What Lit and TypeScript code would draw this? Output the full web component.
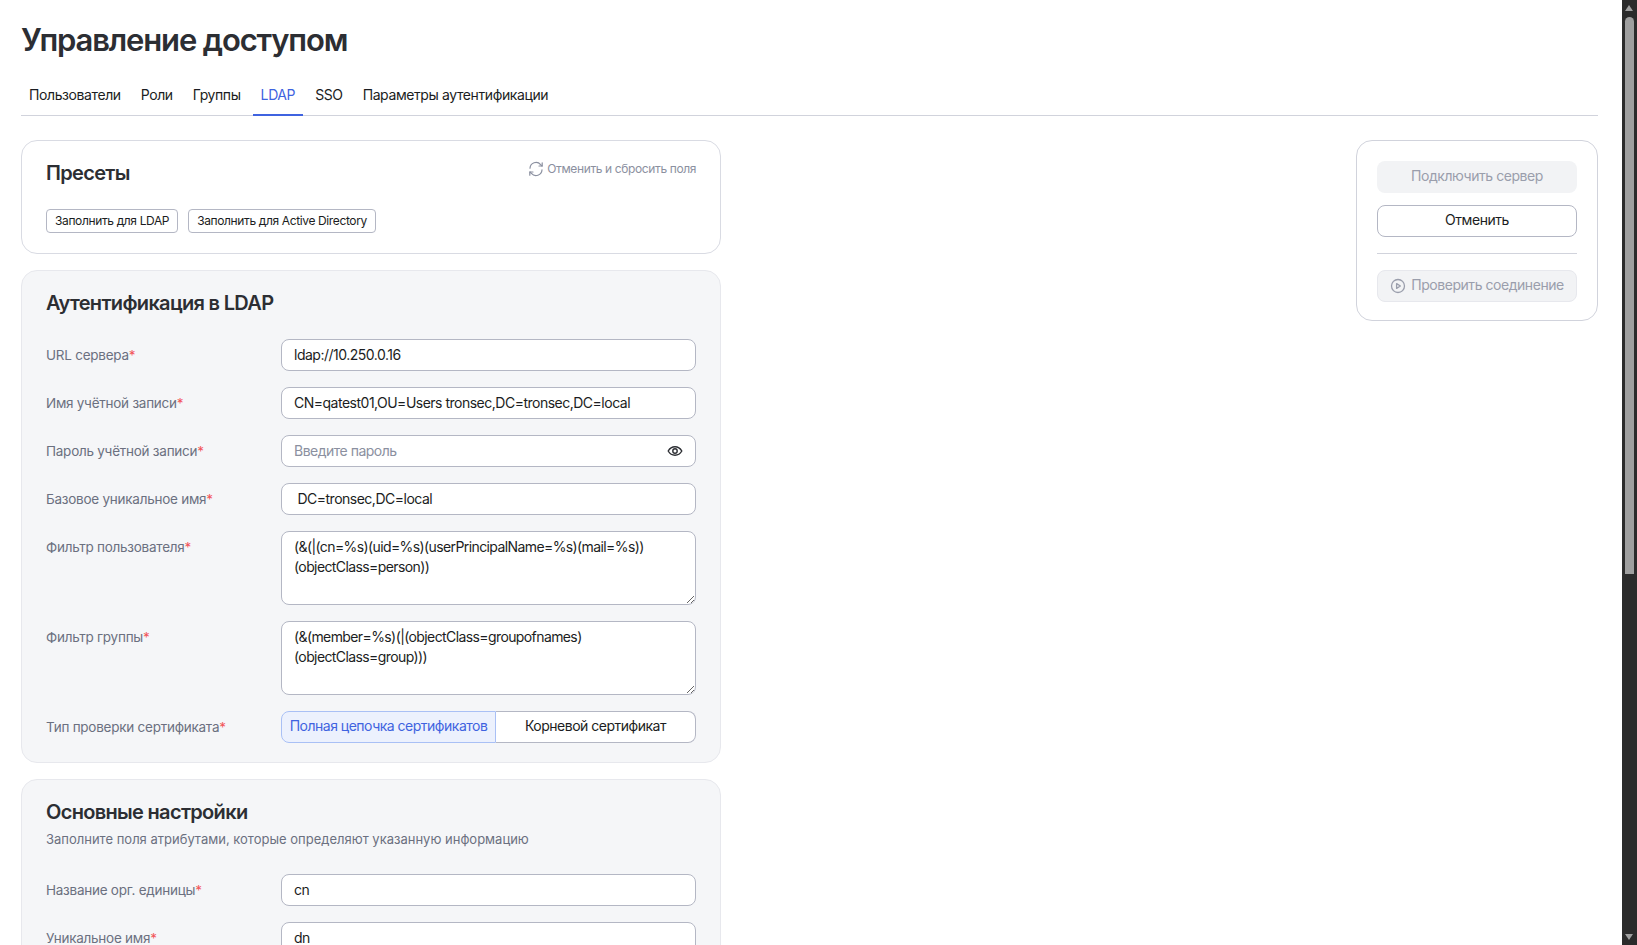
import {LitElement, html, css} from 'lit';
import {customElement} from 'lit/decorators.js';

const tabs = ['Пользователи', 'Роли', 'Группы', 'LDAP', 'SSO', 'Параметры аутентификации'];

const refreshIcon = html`<svg class="ico-refresh" viewBox="0 0 16 16" fill="none" stroke="currentColor" stroke-width="1.2" stroke-linecap="round" stroke-linejoin="round">
  <path d="M2 7.2A6 6 0 0 1 12.6 3.6L14 5" />
  <path d="M14.2 1.8V5h-3.2" />
  <path d="M14 8.8A6 6 0 0 1 3.4 12.4L2 11" />
  <path d="M1.8 14.2V11H5" />
</svg>`;

const eyeIcon = html`<svg class="ico-eye" viewBox="0 0 16 16" fill="none" stroke="currentColor" stroke-width="1.4">
  <path d="M1.2 8C2.8 5.2 5.2 3.8 8 3.8s5.2 1.4 6.8 4.2c-1.6 2.8-4 4.2-6.8 4.2S2.800 10.800 1.200 8z" />
  <circle cx="8" cy="8" r="2.200" />
</svg>`;

const playIcon = html`<svg class="ico-play" viewBox="0 0 16 16" fill="none" stroke="currentColor" stroke-width="1.300" stroke-linejoin="round">
  <circle cx="8" cy="8" r="6.500" />
  <path d="M6.600 5.600 10.400 8l-3.800 2.400z" />
</svg>`;

@customElement('app-root')
export class AppRoot extends LitElement {
  static styles = css`
    :host {
      display: flex;
      height: 945px;
      overflow: hidden;
      background: #fff;
      color: #1b1d22;
      font-family: Inter, 'Noto Sans', sans-serif;
      font-size: 14px;
    }

    * {
      box-sizing: border-box;
    }

    .page {
      flex: 1;
      min-width: 0;
      padding: 20px 24px 0 21px;
      overflow: hidden;
    }

    h1 {
      margin: 0;
      height: 40px;
      font-size: 31px;
      line-height: 40px;
      font-weight: 600;
      letter-spacing: -1.15px;
      color: #2c2e33;
    }

    .tabs {
      display: flex;
      gap: 4px;
      height: 36px;
      margin-top: 20px;
      margin-bottom: 24px;
      border-bottom: 1px solid #d1d3dc;
    }

    .tab {
      padding: 0 8px;
      height: 36px;
      line-height: 30px;
      letter-spacing: -0.4px;
      color: #1b1d22;
      white-space: nowrap;
    }

    .tab.active {
      color: #3f63e0;
      border-bottom: 2px solid #3f63e0;
    }

    .columns {
      display: flex;
      justify-content: space-between;
      align-items: flex-start;
    }

    .forms {
      display: flex;
      flex-direction: column;
      gap: 16px;
      width: 700px;
    }

    .card {
      border: 1px solid #e7e8ed;
      border-radius: 16px;
      padding: 19px 24px;
      background: #f5f6f8;
    }

    .presets {
      background: #fff;
      border-color: #d9dbe3;
      height: 114px;
    }

    .presets-head {
      display: flex;
      justify-content: space-between;
      align-items: flex-start;
      height: 49px;
    }

    h2 {
      margin: 0;
      font-size: 20px;
      line-height: 26px;
      font-weight: 600;
      letter-spacing: -0.68px;
      color: #2c2e33;
    }

    .reset {
      display: flex;
      align-items: center;
      gap: 3px;
      margin-top: 1px;
      font-size: 12px;
      line-height: 16px;
      letter-spacing: -0.38px;
      color: #8b90a0;
    }

    .ico-refresh {
      width: 16px;
      height: 16px;
    }

    .preset-buttons {
      display: flex;
      gap: 10px;
    }

    .small-btn {
      height: 24px;
      padding: 0 8px 2px;
      border: 1px solid #b4b7c4;
      border-radius: 4px;
      background: #fff;
      font: inherit;
      font-size: 12px;
      letter-spacing: -0.37px;
      color: #1b1d22;
      white-space: nowrap;
    }

    .section-title {
      margin-bottom: 23px;
    }

    .subtitle {
      margin-top: 5px;
      margin-bottom: 26px;
      font-size: 13px;
      line-height: 18px;
      color: #6b7080;
    }

    .rows {
      display: flex;
      flex-direction: column;
      gap: 16px;
    }

    .row {
      display: grid;
      grid-template-columns: 235px 415px;
    }

    .label {
      padding-top: 6px;
      line-height: 20px;
      font-size: 13.5px;
      letter-spacing: -0.25px;
      color: #6b7080;
    }

    .req {
      color: #f2555a;
    }

    .field {
      position: relative;
    }

    input,
    textarea {
      display: block;
      width: 100%;
      border: 1px solid #b4b7c4;
      border-radius: 8px;
      background: #fff;
      font: inherit;
      letter-spacing: -0.5px;
      color: #1b1d22;
      padding: 0 12px 2px;
      outline: none;
    }

    input {
      height: 32px;
    }

    input::placeholder {
      color: #8b90a0;
    }

    textarea {
      height: 74px;
      padding-top: 5px;
      line-height: 20px;
      letter-spacing: -0.6px;
      resize: vertical;
      overflow: hidden;
    }

    .eye-btn {
      position: absolute;
      right: 13px;
      top: 8px;
      color: #2c2e33;
      line-height: 0;
    }

    .ico-eye {
      width: 16px;
      height: 16px;
    }

    .segment {
      display: grid;
      grid-template-columns: 215px 1fr;
      height: 32px;
      border-radius: 8px;
      background: #fff;
      text-align: center;
      line-height: 28px;
      letter-spacing: -0.5px;
    }

    .seg {
      border: 1px solid #b4b7c4;
      border-left: none;
      border-radius: 0 8px 8px 0;
    }

    .seg.on {
      border: 1px solid #a9c0f5;
      border-radius: 8px 0 0 8px;
      background: #ecf1fd;
      color: #3f63e0;
      white-space: nowrap;
    }

    .actions {
      display: flex;
      flex-direction: column;
      width: 242px;
      padding: 20px 20px 18px;
      border: 1px solid #d1d3dc;
      border-radius: 16px;
      background: #fff;
    }

    .btn {
      display: flex;
      align-items: center;
      justify-content: center;
      gap: 5px;
      height: 32px;
      padding-bottom: 3px;
      border-radius: 8px;
      font-size: 14px;
      letter-spacing: -0.45px;
    }

    .btn.off {
      background: #f2f3f5;
      color: #9a9eac;
    }

    .btn.cancel {
      margin-top: 12px;
      border: 1px solid #b4b7c4;
      color: #1b1d22;
    }

    .btn.check {
      border: 1px solid #e7e8ed;
    }

    .ico-play {
      width: 16px;
      height: 16px;
      margin-top: 3px;
    }

    .divider {
      height: 1px;
      margin: 16px 0;
      background: #d1d3dc;
    }

    .scrollbar {
      position: relative;
      flex: none;
      width: 15px;
      height: 945px;
      background: #2b2b2b;
    }

    .thumb {
      position: absolute;
      left: 3px;
      top: 17px;
      width: 9px;
      height: 557px;
      border-radius: 5px 5px 0 0;
      background: #9f9f9f;
    }

    .arrow {
      position: absolute;
      left: 3px;
      width: 0;
      height: 0;
      border-left: 4.5px solid transparent;
      border-right: 4.5px solid transparent;
    }

    .arrow.up {
      top: 5px;
      border-bottom: 6px solid #9f9f9f;
    }

    .arrow.down {
      bottom: 5px;
      border-top: 6px solid #9f9f9f;
    }
  `;

  renderLabel(text: string) {
    return html`<div class="label">${text}<span class="req">*</span></div>`;
  }

  renderInput(label: string, value: string) {
    return html`<div class="row">
      ${this.renderLabel(label)}
      <div class="field"><input .value=${value} /></div>
    </div>`;
  }

  renderArea(label: string, value: string) {
    return html`<div class="row">
      ${this.renderLabel(label)}
      <div class="field"><textarea .value=${value}></textarea></div>
    </div>`;
  }

  render() {
    return html`
      <div class="page">
        <h1>Управление доступом</h1>
        <div class="tabs">
          ${tabs.map((t) => html`<div class="tab ${t === 'LDAP' ? 'active' : ''}">${t}</div>`)}
        </div>
        <div class="columns">
          <div class="forms">
            <div class="card presets">
              <div class="presets-head">
                <h2>Пресеты</h2>
                <div class="reset">${refreshIcon}Отменить и сбросить поля</div>
              </div>
              <div class="preset-buttons">
                <button class="small-btn">Заполнить для LDAP</button>
                <button class="small-btn">Заполнить для Active Directory</button>
              </div>
            </div>

            <div class="card">
              <h2 class="section-title">Аутентификация в LDAP</h2>
              <div class="rows">
                ${this.renderInput('URL сервера', 'ldap://10.250.0.16')}
                ${this.renderInput('Имя учётной записи', 'CN=qatest01,OU=Users tronsec,DC=tronsec,DC=local')}
                <div class="row">
                  ${this.renderLabel('Пароль учётной записи')}
                  <div class="field">
                    <input placeholder="Введите пароль" />
                    <span class="eye-btn">${eyeIcon}</span>
                  </div>
                </div>
                ${this.renderInput('Базовое уникальное имя', ' DC=tronsec,DC=local')}
                ${this.renderArea('Фильтр пользователя', '(&(|(cn=%s)(uid=%s)(userPrincipalName=%s)(mail=%s))\n(objectClass=person))')}
                ${this.renderArea('Фильтр группы', '(&(member=%s)(|(objectClass=groupofnames)\n(objectClass=group)))')}
                <div class="row">
                  ${this.renderLabel('Тип проверки сертификата')}
                  <div class="segment">
                    <div class="seg on">Полная цепочка сертификатов</div>
                    <div class="seg">Корневой сертификат</div>
                  </div>
                </div>
              </div>
            </div>

            <div class="card">
              <h2>Основные настройки</h2>
              <div class="subtitle">Заполните поля атрибутами, которые определяют указанную информацию</div>
              <div class="rows">
                ${this.renderInput('Название орг. единицы', 'cn')}
                ${this.renderInput('Уникальное имя', 'dn')}
              </div>
            </div>
          </div>

          <div class="actions">
            <div class="btn off">Подключить сервер</div>
            <div class="btn cancel">Отменить</div>
            <div class="divider"></div>
            <div class="btn off check">${playIcon}Проверить соединение</div>
          </div>
        </div>
      </div>
      <div class="scrollbar">
        <div class="arrow up"></div>
        <div class="thumb"></div>
        <div class="arrow down"></div>
      </div>
    `;
  }
}
